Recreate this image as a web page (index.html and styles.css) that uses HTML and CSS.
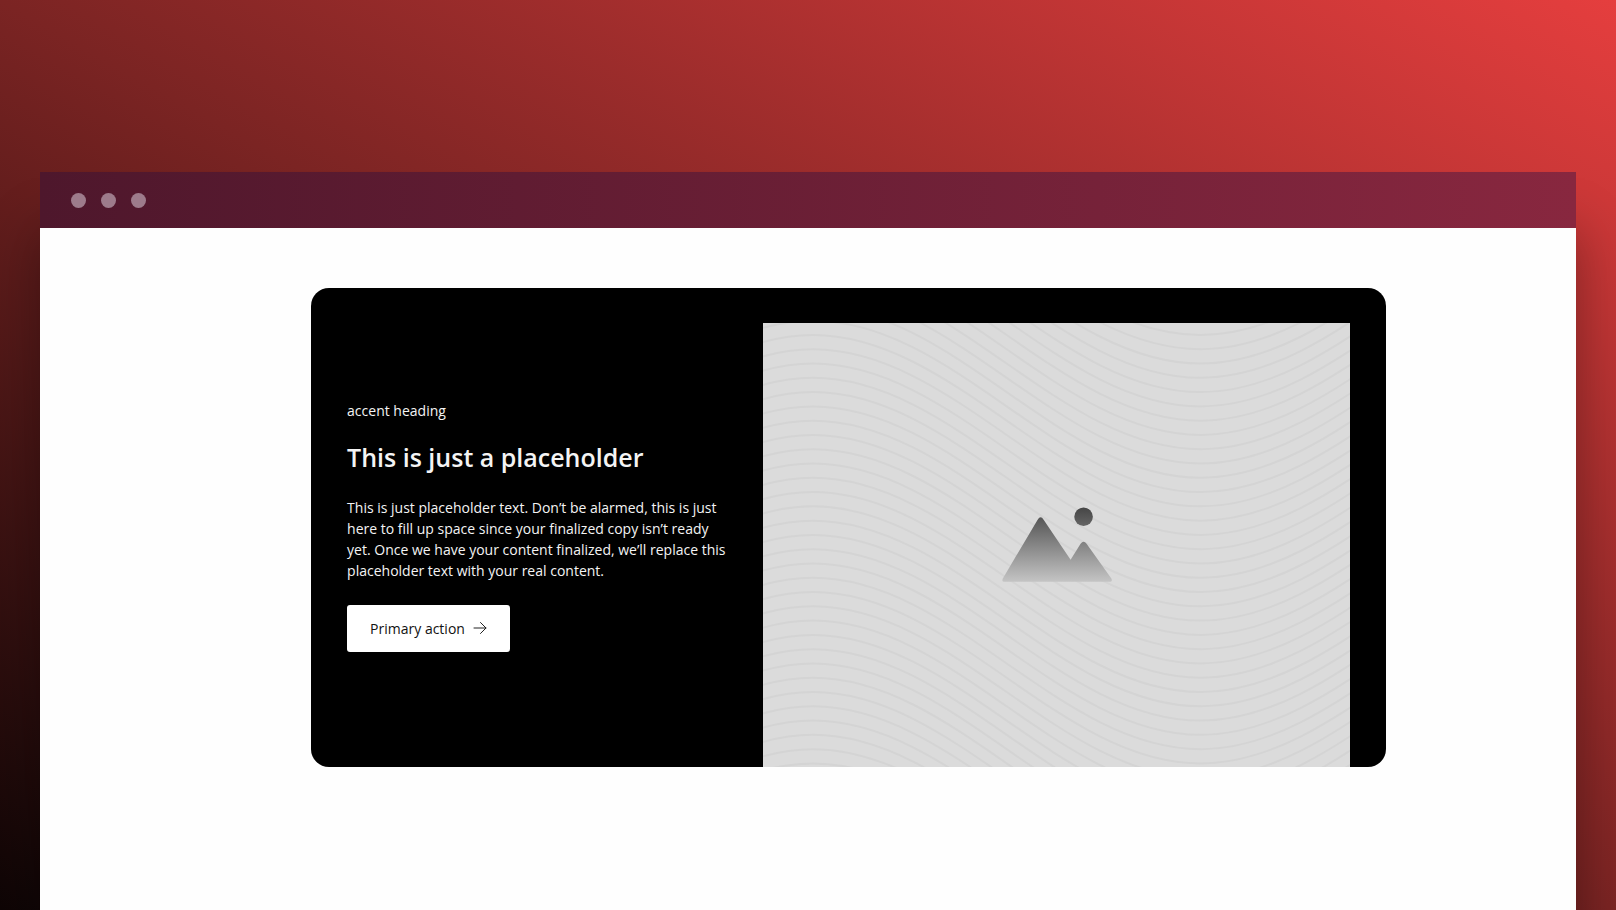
FILE: index.html
```html
<!DOCTYPE html>
<html lang="en">
<head>
<meta charset="utf-8">
<meta name="viewport" content="width=device-width, initial-scale=1">
<title>Placeholder card</title>
<link rel="stylesheet" href="styles.css">
</head>
<body>
<main class="stage">
  <section class="window">
    <header class="window-bar">
      <span class="dot"></span>
      <span class="dot"></span>
      <span class="dot"></span>
    </header>
    <div class="window-body">
      <article class="card">
        <div class="card-content">
          <p class="accent">accent heading</p>
          <h1 class="title">This is just a placeholder</h1>
          <p class="copy">This is just placeholder text. Don’t be alarmed, this is just here to fill up space since your finalized copy isn’t ready yet. Once we have your content finalized, we’ll replace this placeholder text with your real content.</p>
          <button class="action" type="button">
            Primary action
            <svg class="arrow" viewBox="0 0 14 14" aria-hidden="true"><path d="M1 7h12M7.500 1.500 13 7l-5.500 5.500"/></svg>
          </button>
        </div>
        <svg class="picture" viewBox="0 0 588 445" preserveAspectRatio="xMidYMid slice" role="img" aria-label="Image placeholder">
          <defs>
            <linearGradient id="peak" gradientUnits="userSpaceOnUse" x1="0" y1="184" x2="0" y2="259">
              <stop offset="0" stop-color="#444"/>
              <stop offset="1" stop-color="#c4c4c4"/>
            </linearGradient>
          </defs>
          <g id="lines"></g>
          <path fill="url(#peak)" d="M275 197q3-5 6 0l27 40 10-16q3-4 6 0l25 35q1 3-1 3H241q-2 0-1-3z"/>
          <circle fill="url(#peak)" cx="321" cy="194" r="9.300"/>
        </svg>
      </article>
    </div>
  </section>
</main>
<script src="waves.js"></script>
</body>
</html>
```
FILE: waves.js
```js
// Repeats one wave down the picture at an even pitch.
const lines = document.getElementById("lines");
const pitch = 14.3;
const depth = pitch * 12;
for (let y = 12 - pitch * 13; y < 460; y += pitch) {
  const path = document.createElementNS("http://www.w3.org/2000/svg", "path");
  const low = y + depth;
  path.setAttribute("class", "wave");
  path.setAttribute("d", `M-338 ${low}C-197 ${low}-91 ${y} 50 ${y}S297 ${low} 438 ${low} 685 ${y} 826 ${y}`);
  lines.append(path);
}
```
FILE: styles.css
```css
* {
  box-sizing: border-box;
}

body {
  margin: 0;
  font-family: "Open Sans", "Noto Sans", sans-serif;
}

.stage {
  display: flex;
  min-height: 100vh;
  padding: 172px 40px 0;
  overflow: hidden;
  background: linear-gradient(to top right, #0e0505, #7b2423 50%, #e53e3e);
}

.window {
  display: flex;
  flex: 1;
  flex-direction: column;
  box-shadow: 0 60px 50px rgba(0, 0, 0, 0.35);
}

.window-bar {
  display: flex;
  gap: 15px;
  align-items: center;
  height: 56px;
  padding: 0 31px;
  background: linear-gradient(to right, #4e172c, #88273f);
}

.dot {
  width: 15px;
  height: 15px;
  border-radius: 50%;
  background: #9d7b8b;
}

.window-body {
  flex: 1;
  padding: 60px 0;
  background: #fefefe;
}

.card {
  display: grid;
  grid-template-columns: minmax(0, 11fr) minmax(0, 17fr);
  gap: 36px;
  width: 70%;
  margin-left: 17.65%;
  padding: 35px 36px 0;
  overflow: hidden;
  border-radius: 18px;
  background: #000;
  color: #f4f4f4;
}

.card-content {
  align-self: center;
  padding-bottom: 38px;
}

.accent {
  margin: 0;
  font-size: 14px;
  line-height: 20px;
}

.title {
  margin: 20px 0 24px;
  font-size: 25px;
  font-weight: 600;
  line-height: 32px;
}

.copy {
  margin: 0 0 24px;
  font-size: 14px;
  line-height: 21px;
}

.action {
  display: flex;
  gap: 8px;
  align-items: center;
  height: 47px;
  padding: 0 23px;
  border: 0;
  border-radius: 3px;
  background: #fff;
  color: #111;
  font: inherit;
  font-size: 14px;
}

.arrow {
  width: 14px;
  height: 14px;
  fill: none;
  stroke: #222;
  stroke-width: 1;
  stroke-linecap: round;
  stroke-linejoin: round;
}

.picture {
  display: block;
  width: 100%;
  background: #dbdbdb;
}

.wave {
  fill: none;
  stroke: #d4d4d4;
  stroke-width: 2;
}
```
